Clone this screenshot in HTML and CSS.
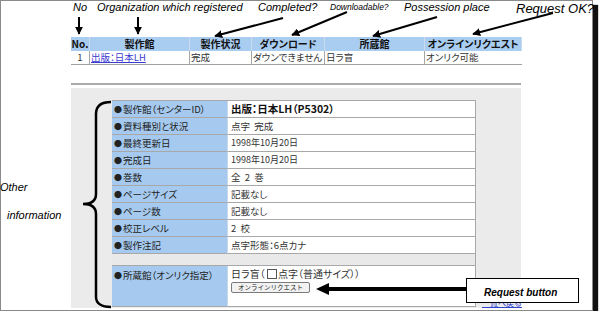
FILE: index.html
```html
<!DOCTYPE html>
<html lang="ja">
<head>
<meta charset="utf-8">
<title>Detail</title>
<link rel="stylesheet" href="styles.css">
</head>
<body>
<div class="frame">
  <div class="main">
    <div class="list">
      <div class="h">No.</div><div class="h">製作館</div><div class="h">製作状況</div><div class="h">ダウンロード</div><div class="h">所蔵館</div><div class="h">オンラインリクエスト</div>
      <div class="d c">1</div><div class="d"><a href="#">出版：日本LH</a></div><div class="d">完成</div><div class="d">ダウンできません</div><div class="d">日ラ盲</div><div class="d">オンリク可能</div>
    </div>
    <div class="rule"></div>
    <div class="panel">
      <div class="detail">
        <div class="lb"><span class="dot">●</span>製作館（センターID）</div><div class="vl strong">出版：日本LH（P5302）</div>
        <div class="lb"><span class="dot">●</span>資料種別と状況</div><div class="vl">点字&nbsp;&nbsp;完成</div>
        <div class="lb"><span class="dot">●</span>最終更新日</div><div class="vl sm">1998年10月20日</div>
        <div class="lb"><span class="dot">●</span>完成日</div><div class="vl sm">1998年10月20日</div>
        <div class="lb"><span class="dot">●</span>巻数</div><div class="vl">全&nbsp;&nbsp;2&nbsp;&nbsp;巻</div>
        <div class="lb"><span class="dot">●</span>ページサイズ</div><div class="vl">記載なし</div>
        <div class="lb"><span class="dot">●</span>ページ数</div><div class="vl">記載なし</div>
        <div class="lb"><span class="dot">●</span>校正レベル</div><div class="vl">2&nbsp;&nbsp;校</div>
        <div class="lb"><span class="dot">●</span>製作注記</div><div class="vl">点字形態：6点カナ</div>
        <div class="blank"></div>
        <div class="lb top"><span class="dot">●</span>所蔵館（オンリク指定）</div>
        <div class="vl top">
          <div class="line">日ラ盲（ <span class="chk"></span>点字（普通サイズ））</div>
          <button class="reqbtn" type="button">オンラインリクエスト</button>
        </div>
      </div>
      <a class="back" href="#">一覧へ戻る</a>
    </div>
  </div>

  <span class="note n-no">No</span>
  <span class="note n-org">Organization which registered</span>
  <span class="note n-comp">Completed?</span>
  <span class="note n-dl">Downloadable?</span>
  <span class="note n-pos">Possession place</span>
  <span class="note n-req">Request OK?</span>
  <span class="note n-other">Other</span>
  <span class="note n-info">information</span>

  <svg class="overlay" width="599" height="319" viewBox="0 0 599 319">
    <defs>
      <marker id="ah" viewBox="0 0 10 10" refX="9" refY="5" markerWidth="8" markerHeight="8" markerUnits="userSpaceOnUse" orient="auto">
        <path d="M0,0 L10,5 L0,10 z" fill="#000"/>
      </marker>
    </defs>
    <g stroke="#000" stroke-width="2" fill="none" marker-end="url(#ah)">
      <line x1="79" y1="17" x2="79" y2="34"/>
      <line x1="138" y1="17" x2="138" y2="34"/>
      <line x1="283" y1="18" x2="215" y2="36"/>
      <line x1="347" y1="12" x2="292" y2="35"/>
      <line x1="437" y1="17" x2="373" y2="36"/>
      <line x1="553" y1="13" x2="473" y2="34"/>
    </g>
    <path d="M111,102 C101,102 96,106 96,114 L96,194 C96,200 92,204 83,204 C92,204 96,208 96,214 L96,297 C96,303 101,307 111,307" stroke="#000" stroke-width="2.5" fill="none"/>
    <line x1="466" y1="289" x2="324" y2="289" stroke="#000" stroke-width="4"/>
    <polygon points="316,289 329,283 329,295" fill="#000"/>
  </svg>

  <div class="callout">Request button</div>
</div>
</body>
</html>
```

FILE: styles.css
```css
html, body {
  margin: 0;
  padding: 0;
  background: #fff;
}

.frame {
  position: relative;
  width: 591px;
  height: 309px;
  border: 1px solid #8a8a8a;
  box-shadow: 5px 5px 1px #111;
  background: #fff;
  overflow: visible;
  font-family: "Noto Sans CJK JP", sans-serif;
  color: #222;
}

.main {
  padding: 36px 0 0 70px;
}

.list {
  display: grid;
  grid-template-columns: 19px 100px 62px 73px 100px 97px;
  width: 451px;
  font-size: 10px;
  font-feature-settings: "palt";
}

.h {
  background: #a9cdf1;
  height: 14px;
  line-height: 14px;
  text-align: center;
  font-weight: bold;
  color: #111;
  border-right: 1px solid #c9dbec;
  box-sizing: border-box;
  white-space: nowrap;
  overflow: hidden;
}

.d {
  height: 14px;
  line-height: 13px;
  font-size: 9.5px;
  border-right: 1px solid #a6a6a6;
  border-bottom: 1px solid #a0a0a0;
  box-sizing: border-box;
  padding-left: 1px;
  white-space: nowrap;
  overflow: hidden;
  color: #333;
}

.d:nth-child(12) { border-right: 0; }
.c { text-align: center; padding-left: 0; }

.d a {
  color: #3a3ad0;
  text-decoration: underline;
}

.rule {
  width: 450px;
  height: 2px;
  background: #ababab;
  margin-top: 18px;
}

.panel {
  margin-top: 3px;
  width: 450px;
  height: 220px;
  box-sizing: border-box;
  background: #ebebeb;
  padding: 13px 0 1px 41px;
  display: flex;
  align-items: flex-end;
}

.detail {
  display: grid;
  grid-template-columns: 116px 1fr;
  grid-template-rows: repeat(9, 17px) 12px 41px;
  width: 364px;
  flex: none;
  box-sizing: border-box;
  border-top: 1px solid #a8a8a8;
  border-right: 1px solid #a8a8a8;
  background: #fff;
  font-size: 9.5px;
  font-feature-settings: "palt";
}

.lb, .vl {
  box-sizing: border-box;
  border-bottom: 1px solid #a8a8a8;
  line-height: 16px;
  white-space: nowrap;
  overflow: hidden;
}

.lb {
  background: #a6caef;
  border-right: 1px solid #c6d8ea;
  padding-left: 2px;
  color: #222;
}

.dot {
  font-size: 8px;
  margin-right: 1px;
}

.vl {
  padding-left: 3px;
  color: #333;
}

.vl.strong {
  font-weight: bold;
  font-size: 10.5px;
  color: #111;
}

.vl.sm { font-size: 9px; }

.blank {
  grid-column: 1 / -1;
  background: #e9e9e9;
  border-bottom: 1px solid #a8a8a8;
}

.top { padding-top: 1px; }

.line { line-height: 14px; font-size: 10px; }

.chk {
  display: inline-block;
  width: 8px;
  height: 8px;
  border: 1px solid #555;
  background: #fff;
  vertical-align: -1px;
  margin-right: 1px;
}

.reqbtn {
  display: block;
  margin-top: 1px;
  width: 79px;
  height: 11px;
  padding: 0;
  border: 1px solid #7a7a7a;
  border-radius: 2px;
  background: #f2f2f2;
  font-family: "Noto Sans CJK JP", sans-serif;
  font-size: 6.5px;
  line-height: 9px;
  color: #222;
}

.back {
  margin-left: 6px;
  font-size: 8px;
  line-height: 9px;
  color: #3344cc;
  text-decoration: underline;
  white-space: nowrap;
}

.note {
  position: absolute;
  font-family: "Liberation Sans", Arial, sans-serif;
  font-style: italic;
  font-size: 11px;
  line-height: 11px;
  color: #000;
  white-space: nowrap;
}

.n-no   { left: 72px;  top: 1px; }
.n-org  { left: 96px;  top: 1px; }
.n-comp { left: 257px; top: 1px; }
.n-dl   { left: 329px; top: 2px; font-size: 8.5px; line-height: 9px; }
.n-pos  { left: 403px; top: 1px; }
.n-req  { left: 515px; top: 1px; font-size: 13px; line-height: 13px; }
.n-other { left: -1px; top: 181px; }
.n-info  { left: 6px;  top: 209px; }

.overlay {
  position: absolute;
  left: -1px;
  top: -1px;
  pointer-events: none;
}

.callout {
  position: absolute;
  left: 465px;
  top: 277px;
  width: 113px;
  height: 25px;
  box-sizing: border-box;
  border: 1px solid #000;
  background: #fff;
  padding-left: 17px;
  font-family: "Liberation Sans", Arial, sans-serif;
  font-style: italic;
  font-weight: bold;
  font-size: 10px;
  line-height: 27px;
  color: #000;
  white-space: nowrap;
}
```
